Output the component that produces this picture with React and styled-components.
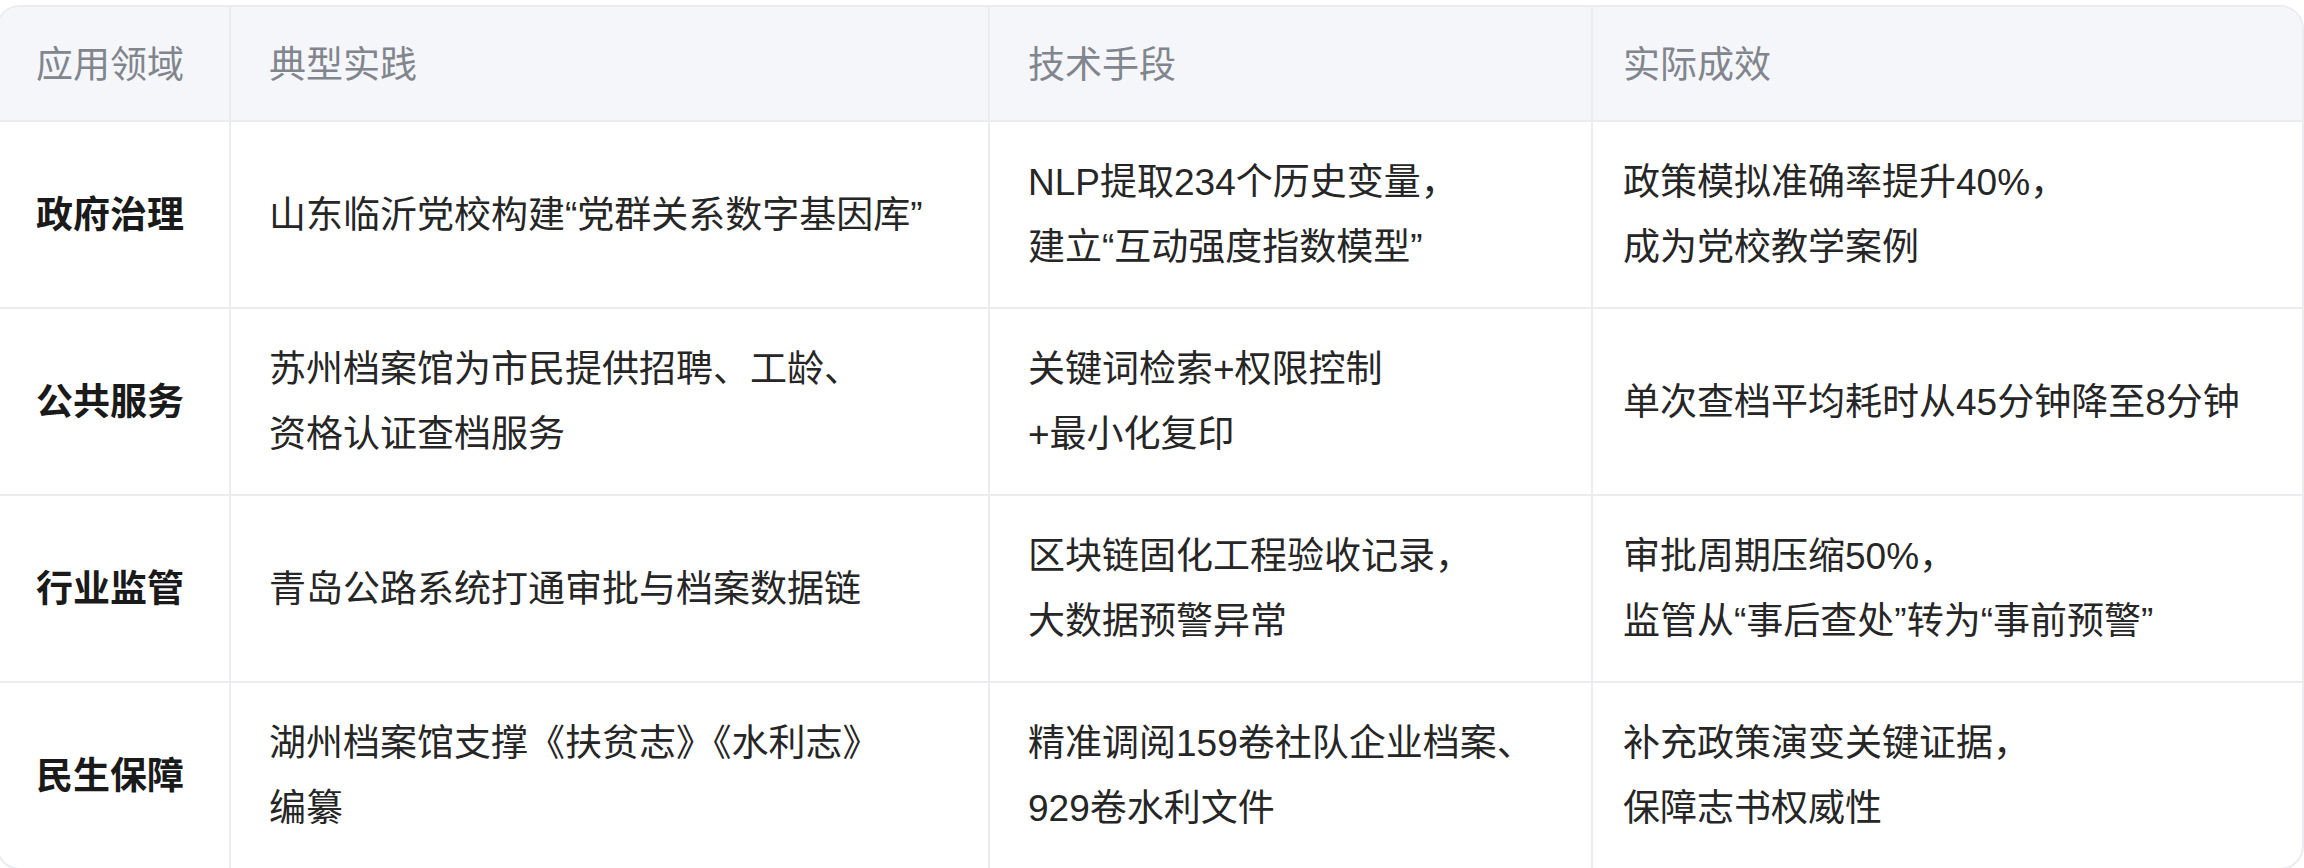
import React from "react";
import styled, { createGlobalStyle } from "styled-components";

const GlobalStyle = createGlobalStyle`
  html, body {
    margin: 0;
    padding: 0;
    background: #ffffff;
    overflow: hidden;
  }
  body {
    font-family: "Liberation Sans", "Noto Sans CJK SC", sans-serif;
  }
`;

const Page = styled.div`
  width: 2304px;
  height: 868px;
  overflow: hidden;
  padding-top: 5px;
  box-sizing: border-box;
`;

const Card = styled.div`
  width: 2308px;
  margin-left: -4px;
  border: 2px solid #ebecef;
  border-radius: 24px;
  overflow: hidden;
  box-sizing: border-box;
`;

const Table = styled.table`
  width: 100%;
  border-collapse: collapse;
  table-layout: fixed;
`;

const HeadCell = styled.th`
  background: #f5f6f9;
  color: #81858d;
  font-weight: 400;
  font-size: 37px;
  line-height: 64px;
  text-align: left;
  padding: 27px 40px 22px ${(p) => (p.$last ? "30px" : "38px")};
  border-left: 2px solid #ebecef;
  border-bottom: 2px solid #ebecef;
  &:first-child {
    border-left: none;
  }
`;

const Cell = styled.td`
  color: ${(p) => (p.$strong ? "#1a1a1a" : "#262626")};
  font-weight: ${(p) => (p.$strong ? 700 : 400)};
  font-size: 37px;
  line-height: 65px;
  text-align: left;
  vertical-align: middle;
  padding: 28px 20px 27px ${(p) => (p.$last ? "30px" : "38px")};
  border-left: 2px solid #ebecef;
  border-top: 2px solid #ebecef;
  &:first-child {
    border-left: none;
  }
`;

const Line = styled.span`
  display: block;
  white-space: nowrap;
`;

const columns = ["应用领域", "典型实践", "技术手段", "实际成效"];
const widths = [232, 759, 603, null];

const rows = [
  {
    area: "政府治理",
    practice: ["山东临沂党校构建“党群关系数字基因库”"],
    tech: ["NLP提取234个历史变量，", "建立“互动强度指数模型”"],
    result: ["政策模拟准确率提升40%，", "成为党校教学案例"],
  },
  {
    area: "公共服务",
    practice: ["苏州档案馆为市民提供招聘、工龄、", "资格认证查档服务"],
    tech: ["关键词检索+权限控制", "+最小化复印"],
    result: ["单次查档平均耗时从45分钟降至8分钟"],
  },
  {
    area: "行业监管",
    practice: ["青岛公路系统打通审批与档案数据链"],
    tech: ["区块链固化工程验收记录，", "大数据预警异常"],
    result: ["审批周期压缩50%，", "监管从“事后查处”转为“事前预警”"],
  },
  {
    area: "民生保障",
    practice: ["湖州档案馆支撑《扶贫志》《水利志》", "编纂"],
    tech: ["精准调阅159卷社队企业档案、", "929卷水利文件"],
    result: ["补充政策演变关键证据，", "保障志书权威性"],
  },
];

const Lines = ({ items }) => items.map((t, i) => <Line key={i}>{t}</Line>);

export default function App() {
  return (
    <Page>
      <GlobalStyle />
      <Card>
        <Table>
          <colgroup>
            {widths.map((w, i) => (
              <col key={i} style={w ? { width: w } : undefined} />
            ))}
          </colgroup>
          <thead>
            <tr>
              {columns.map((c, i) => (
                <HeadCell key={c} $last={i === columns.length - 1}>
                  {c}
                </HeadCell>
              ))}
            </tr>
          </thead>
          <tbody>
            {rows.map((r) => (
              <tr key={r.area}>
                <Cell $strong>{r.area}</Cell>
                <Cell>
                  <Lines items={r.practice} />
                </Cell>
                <Cell>
                  <Lines items={r.tech} />
                </Cell>
                <Cell $last>
                  <Lines items={r.result} />
                </Cell>
              </tr>
            ))}
          </tbody>
        </Table>
      </Card>
    </Page>
  );
}
